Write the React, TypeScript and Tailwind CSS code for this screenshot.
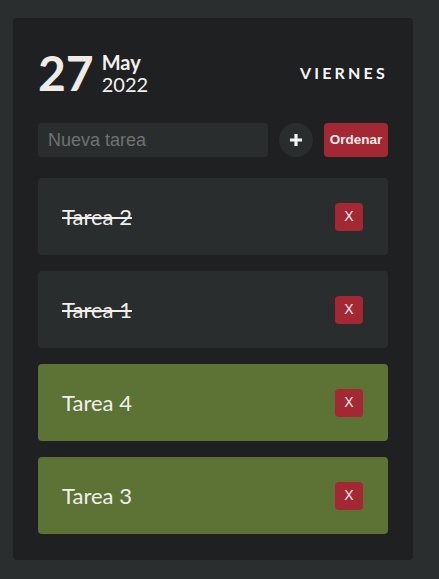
export default function App() {
  const tasks = [
    { name: "Tarea 2", done: true },
    { name: "Tarea 1", done: true },
    { name: "Tarea 4", done: false },
    { name: "Tarea 3", done: false },
  ];

  return (
    <div className="min-h-[579px] w-full bg-[#2b2e2f] pt-[18px] pl-[13px] font-['Lato','Liberation_Sans',sans-serif]">
      <div className="w-[400px] rounded-[4px] bg-[#1f2022] px-[25px] pt-[31px] pb-[26px]">
        {/* fecha */}
        <div className="flex items-center justify-between">
          <div className="flex items-center gap-[8px]">
            <span className="text-[48px] leading-none font-bold text-[#efece8]">27</span>
            <div className="flex flex-col text-[#f3f1ee]">
              <span className="text-[20px] leading-[22px] font-bold">May</span>
              <span className="text-[20px] leading-[22px]">2022</span>
            </div>
          </div>
          <span className="text-[16px] font-bold tracking-[3.2px] text-[#f7f7f7]">VIERNES</span>
        </div>

        {/* nueva tarea */}
        <div className="mt-[26px] flex items-center gap-[11px]">
          <input
            placeholder="Nueva tarea"
            className="h-[34px] w-[230px] rounded-[4px] bg-[#2a2d2e] px-[10px] font-['Liberation_Sans',sans-serif] text-[18px] text-white outline-none placeholder:text-[#6f7172]"
          />
          <button className="flex size-[34px] items-center justify-center rounded-full bg-[#2a2d2e]">
            <svg width="14" height="14" viewBox="0 0 14 14">
              <path d="M7 1v12M1 7h12" stroke="#f4f4f4" strokeWidth="3.2" />
            </svg>
          </button>
          <button className="h-[34px] w-[64px] rounded-[4px] bg-[#a42833] font-['Liberation_Sans',sans-serif] text-[13.5px] font-bold text-[#f2ecec]">
            Ordenar
          </button>
        </div>

        {/* lista */}
        <ul className="mt-[21px] flex flex-col gap-[16px]">
          {tasks.map((t) => (
            <li
              key={t.name}
              className={
                "flex h-[77px] items-center justify-between rounded-[4px] pr-[25px] pl-[24px] " +
                (t.done ? "bg-[#2a2d2e]" : "bg-[#5c7335]")
              }
            >
              <span className={"text-[22px] text-[#f1efec] " + (t.done ? "line-through" : "")}>{t.name}</span>
              <button className="flex size-[28px] items-center justify-center rounded-[4px] bg-[#a42833] font-['Liberation_Sans',sans-serif] text-[14px] text-[#f2ecec]">
                X
              </button>
            </li>
          ))}
        </ul>
      </div>
    </div>
  );
}
